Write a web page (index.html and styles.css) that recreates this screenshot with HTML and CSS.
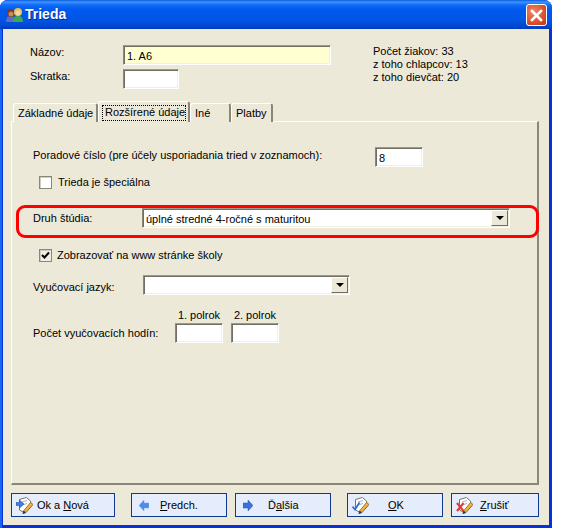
FILE: index.html
```html
<!DOCTYPE html>
<html lang="sk">
<head>
<meta charset="UTF-8">
<title>Trieda</title>
<meta name="viewport" content="width=device-width,initial-scale=1.0">
<link rel="stylesheet" href="styles.css">
</head>
<body>
<svg class="defs" width="0" height="0">
  <symbol id="doc" viewBox="0 0 17 17">
    <path d="M3.500 2.500 10.500 .5l4 3.500.5 6-6 6-5.500-3z" fill="#fff" stroke="#77746a"/>
    <path d="M6 5l5-1.500M6 8l5-1.500" stroke="#9fb0cc"/>
    <path d="M14.500 5.500l2.500 2-7 8-3 1.300 1-3.300z" fill="#f2b544" stroke="#7d5c22" stroke-width=".8"/>
    <path d="M6.500 16.800l1-3.300 2.500 2z" fill="#333"/>
  </symbol>
</svg>
<div class="window">

  <!-- Title bar -->
  <div class="titlebar">
    <svg class="appicon" width="18" height="18" viewBox="0 0 18 18">
      <path d="M1 16c0-5 2-6 5-6s5 1 5 6z" fill="#5a6fc0"/>
      <circle cx="6" cy="7" r="4" fill="#7a3d1c"/>
      <circle cx="6" cy="8" r="2.500" fill="#c98a5a"/>
      <path d="M8 16c0-5 2-6 5-6s5 1 5 6z" fill="#3fa84c"/>
      <circle cx="13" cy="6" r="4" fill="#e8c25a"/>
      <circle cx="13" cy="7" r="2.500" fill="#f3d5a8"/>
    </svg>
    <span class="wintitle">Trieda</span>
    <div class="closebtn">
      <svg width="13" height="13" viewBox="0 0 13 13"><path d="M2 2l9 9M11 2l-9 9" stroke="#fff" stroke-width="2.600" stroke-linecap="square"/></svg>
    </div>
  </div>

  <div class="client">

    <!-- Header fields -->
    <div class="head">
      <div class="headfields">
        <div class="row">
          <label class="lbl-name">Názov:</label>
          <div class="field field-name">1. A6</div>
        </div>
        <div class="row">
          <label class="lbl-name">Skratka:</label>
          <div class="field field-short"></div>
        </div>
      </div>
      <div class="stats">
        Počet žiakov: 33<br>
        z toho chlapcov: 13<br>
        z toho dievčat: 20
      </div>
    </div>

    <!-- Tabs -->
    <div class="tabs">
      <div class="tab">Základné údaje</div>
      <div class="tab tab-on"><span class="focus">Rozšírené údaje</span></div>
      <div class="tab tab-ine">Iné</div>
      <div class="tab tab-platby">Platby</div>
    </div>

    <div class="panel">
      <div class="row row-order">
        <label class="lbl-order">Poradové číslo (pre účely usporiadania tried v zoznamoch):</label>
        <div class="field field-num">8</div>
      </div>

      <div class="check check-special">
        <span class="box"></span>
        <span>Trieda je špeciálna</span>
      </div>

      <div class="row row-study">
        <label class="lbl-combo">Druh štúdia:</label>
        <div class="field combo combo-study">
          úplné stredné 4-ročné s maturitou
          <span class="arrow"></span>
        </div>
      </div>

      <div class="check check-web">
        <span class="box">
          <svg width="9" height="9" viewBox="0 0 9 9"><path d="M1 4l2.500 2.500L8 1.500" fill="none" stroke="#000" stroke-width="2"/></svg>
        </span>
        <span>Zobrazovať na www stránke školy</span>
      </div>

      <div class="row row-lang">
        <label class="lbl-combo">Vyučovací jazyk:</label>
        <div class="field combo combo-lang"><span class="arrow"></span></div>
      </div>

      <div class="hours">
        <span></span>
        <span class="cap">1. polrok</span>
        <span class="cap">2. polrok</span>
        <label>Počet vyučovacích hodín:</label>
        <div class="field field-hour"></div>
        <div class="field field-hour"></div>
      </div>

      <!-- red marker drawn over the screenshot -->
      <div class="marker"></div>
    </div>

    <!-- Buttons -->
    <div class="buttons">
      <div class="btn btn-new">
        <svg class="ico" width="17" height="17" viewBox="0 0 17 17"><use href="#doc"/><path d="M0 5.500h3.500V3L8 7l-4.500 4V8.500H0z" fill="#3f7fe0" stroke="#2a55a8" stroke-width=".6"/></svg>
        <span class="cap-new">Ok a <u>N</u>ová</span>
      </div>
      <div class="btn btn-prev">
        <svg class="ico-small" width="10" height="11" viewBox="0 0 10 11"><path d="M10 3H5V0L0 5.500 5 11V8h5z" fill="#4f8be6" stroke="#7aa6e8" stroke-width=".5"/></svg>
        <span class="cap-prev"><u>P</u>redch.</span>
      </div>
      <div class="btn btn-next">
        <svg class="ico-small" width="10" height="11" viewBox="0 0 10 11"><path d="M0 3h5V0l5 5.500L5 11V8H0z" fill="#3f6fd8" stroke="#2a55a8" stroke-width=".5"/></svg>
        <span class="cap-next">Ď<u>a</u>lšia</span>
      </div>
      <div class="btn btn-ok">
        <svg class="ico" width="17" height="17" viewBox="0 0 17 17"><use href="#doc"/><path d="M.5 9.500l2.500 3 4.500-7" fill="none" stroke="#2f6fd0" stroke-width="1.800"/></svg>
        <span class="cap-ok"><u>O</u>K</span>
      </div>
      <div class="btn btn-cancel">
        <svg class="ico" width="17" height="17" viewBox="0 0 17 17"><use href="#doc"/><path d="M1 6l6.500 8M7.500 6L1 14" fill="none" stroke="#e0392b" stroke-width="2"/></svg>
        <span class="cap-cancel"><u>Z</u>rušiť</span>
      </div>
    </div>

  </div>
</div>
</body>
</html>
```

FILE: styles.css
```css
body{margin:0;background:#fff;font-family:"Liberation Sans",Arial,sans-serif;font-size:11px;color:#000;line-height:13px}
.defs{position:absolute}
.window{width:552px;height:528px;box-sizing:border-box;display:flex;flex-direction:column;background:#0831d9;border-radius:8px 8px 0 0;overflow:hidden;box-shadow:inset 2px 0 #1667f0}

.titlebar{height:29px;flex:none;display:flex;align-items:center;padding:0 5px;box-sizing:border-box;background:linear-gradient(#0a5ae0 0,#3d95ff 2px,#0f6af5 5px,#0058ee 10px,#0055e5 20px,#0048d0 26px,#003bb8 29px)}
.appicon{margin-right:2px;flex:none}
.wintitle{flex:1;font-weight:bold;font-size:14px;color:#fff;text-shadow:1px 1px #0a2a90}
.closebtn{width:19px;height:20px;border:1px solid #fff;border-radius:3px;background:radial-gradient(circle at 35% 35%,#ee8a68,#d9502c 60%,#b53a17);display:flex;align-items:center;justify-content:center;margin-top:1px}

.client{flex:1;margin:0 3px 3px;background:#ece9d8;display:flex;flex-direction:column}

.row{display:flex;align-items:flex-start}
.field{box-sizing:border-box;height:20px;background:#fff;border:1px solid;border-color:#9d9a8c #fff #fff #8a8778;box-shadow:inset 1px 1px #716f64,inset -1px -1px #f1efe2;padding:4px 0 0 3px}

.head{height:72px;flex:none;display:flex;padding:16px 0 0 27px;box-sizing:border-box}
.headfields{display:flex;flex-direction:column;gap:4px;width:301px;flex:none}
.lbl-name{width:93px;flex:none;padding-top:1px}
.field-name{width:208px;background:#ffffd2}
.field-short{width:56px}
.stats{margin-left:42px}

.tabs{display:flex;height:21px;flex:none;align-items:flex-end;margin-left:10px;position:relative;z-index:1;margin-bottom:-1px}
.tab{height:19px;width:85px;box-sizing:border-box;border:1px solid #fff;border-bottom:none;border-right:2px solid #8a8778;border-radius:3px 3px 0 0;padding:3px 0 0 4px;background:#ece9d8;white-space:nowrap}
.tab-on{height:21px;width:92px;padding:3px}
.focus{display:block;border:1px dotted #000;padding:0 0 1px 2px;width:84px;box-sizing:border-box;white-space:nowrap}
.tab-ine{width:41px}
.tab-platby{width:42px}

.panel{position:relative;margin-left:8px;width:528px;height:364px;flex:none;box-sizing:border-box;border:1px solid #fff;border-right:2px solid #8a8778;border-bottom:2px solid #8a8778;padding:25px 0 0 21px}
.lbl-order{width:342px;flex:none;padding-top:2px}
.field-num{width:48px}

.check{display:flex;align-items:center;height:13px}
.box{width:13px;height:13px;box-sizing:border-box;border:1px solid #8a8778;background:#fff;box-shadow:inset 1px 1px #cfcdbf;display:flex;align-items:center;justify-content:center}
.check-special{margin:9px 0 0 6px;gap:6px}
.check-web{margin:21px 0 0 6px;gap:5px}
.check-web .box{background:#f1efe2}

.row-study{margin-top:19px}
.row-lang{margin-top:13px}
.lbl-combo{width:109px;flex:none;padding-top:4px}
.row-lang .lbl-combo{width:110px;padding-top:6px}
.combo{position:relative}
.combo-study{width:368px}
.combo-lang{width:207px}
.arrow{position:absolute;top:1px;right:1px;width:17px;height:16px;box-sizing:border-box;background:#ece9d8;border:1px solid;border-color:#fff #716f64 #716f64 #fff;display:flex;align-items:center;justify-content:center}
.arrow::after{content:"";border:4px solid transparent;border-top:4px solid #000;border-bottom:none}

.hours{display:grid;grid-template-columns:134px 48px 48px;column-gap:8px;margin-top:14px;align-items:center}
.hours .cap{text-align:center;height:14px}
.field-hour{width:48px}

.marker{position:absolute;left:4px;top:83px;width:523px;height:33px;box-sizing:border-box;border:3px solid #f00;border-radius:9px}

.buttons{display:flex;padding:8px 0 0 8px}
.btn{height:24px;box-sizing:border-box;border:1px solid #0f3a92;background:#e5ecfb;display:flex;align-items:center;flex:none}
.btn-new{width:104px;margin-right:16px}
.btn-prev{width:96px;margin-right:8px}
.btn-next{width:96px;margin-right:16px}
.btn-ok{width:96px;margin-right:8px}
.btn-cancel{width:88px}
.ico{margin-left:4px;flex:none}
.ico-small{margin-left:7px;flex:none}
.cap-new{margin-left:4px}
.cap-prev{margin-left:11px}
.cap-next{margin-left:15px}
.cap-ok{margin-left:19px}
.cap-cancel{margin-left:7px}
```
